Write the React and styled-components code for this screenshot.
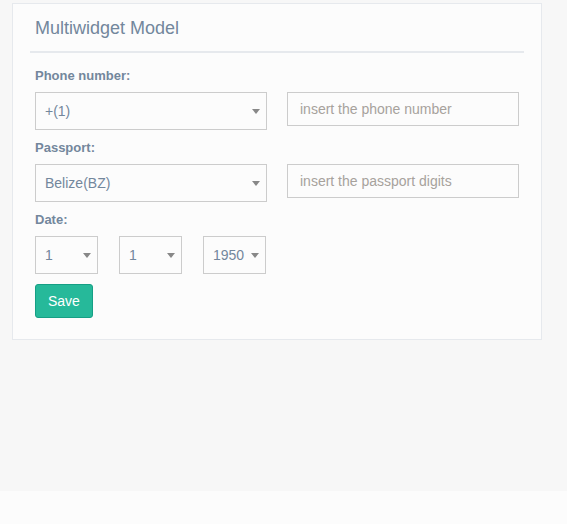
import styled, { createGlobalStyle } from "styled-components";

const GlobalStyle = createGlobalStyle`
  body {
    margin: 0;
    background: #fcfcfc;
    font-family: "Liberation Sans", Arial, sans-serif;
  }
`;

const Page = styled.div`
  height: 491px;
  box-sizing: border-box;
  padding: 3px 0 0 12px;
  background: #f7f7f7;
`;

const Panel = styled.div`
  width: 530px;
  height: 337px;
  box-sizing: border-box;
  padding: 10px 17px;
  background: #fcfcfc;
  border: 1px solid #e6e9ed;
`;

const Title = styled.div`
  padding: 2px 5px 11px;
  border-bottom: 2px solid #e6e9ed;

  h2 {
    margin: 0;
    font-size: 18px;
    line-height: 24px;
    font-weight: 400;
    color: #73879c;
  }
`;

const Form = styled.form`
  padding: 14px 5px 0;
`;

const Group = styled.div`
  margin-bottom: 9px;
`;

const Label = styled.label`
  display: block;
  margin-bottom: 7px;
  font-size: 13px;
  line-height: 18px;
  font-weight: 700;
  color: #73879c;
`;

const Row = styled.div`
  display: grid;
  grid-template-columns: ${(p) => p.$cols || "232px 232px"};
  column-gap: ${(p) => p.$gap || "20px"};
  align-items: start;
`;

const SelectWrap = styled.div`
  position: relative;

  &::after {
    content: "";
    position: absolute;
    right: 7px;
    top: 17px;
    border-left: 4px solid transparent;
    border-right: 4px solid transparent;
    border-top: 5px solid #888;
    pointer-events: none;
  }
`;

const Select = styled.select`
  appearance: none;
  display: block;
  width: 100%;
  height: 38px;
  margin: 0;
  padding: 0 20px 0 9px;
  box-sizing: border-box;
  border: 1px solid #ccc;
  border-radius: 0;
  background: #fcfcfc;
  font-family: "Liberation Sans", Arial, sans-serif;
  font-size: 14px;
  color: #73879c;
  outline: none;
`;

const Input = styled.input`
  display: block;
  width: 100%;
  height: 34px;
  margin: 0;
  padding: 0 12px;
  box-sizing: border-box;
  border: 1px solid #ccc;
  background: #fcfcfc;
  font-family: "Liberation Sans", Arial, sans-serif;
  font-size: 14px;
  color: #555;
  outline: none;

  &::placeholder {
    color: #a7a29c;
  }
`;

const Button = styled.button`
  margin-top: 1px;
  height: 34px;
  padding: 0 12px;
  border: 1px solid #169f85;
  border-radius: 3px;
  background: #26b99a;
  color: #fff;
  font-family: "Liberation Sans", Arial, sans-serif;
  font-size: 14px;
  cursor: pointer;
`;

function Dropdown({ value, options }) {
  return (
    <SelectWrap>
      <Select defaultValue={value}>
        {options.map((o) => (
          <option key={o}>{o}</option>
        ))}
      </Select>
    </SelectWrap>
  );
}

export default function App() {
  return (
    <>
      <GlobalStyle />
      <Page>
        <Panel>
          <Title>
            <h2>Multiwidget Model</h2>
          </Title>
          <Form onSubmit={(e) => e.preventDefault()}>
            <Group>
              <Label>Phone number:</Label>
              <Row>
                <Dropdown value="+(1)" options={["+(1)", "+(44)", "+(501)"]} />
                <Input placeholder="insert the phone number" />
              </Row>
            </Group>
            <Group>
              <Label>Passport:</Label>
              <Row>
                <Dropdown value="Belize(BZ)" options={["Belize(BZ)", "Canada(CA)", "Mexico(MX)"]} />
                <Input placeholder="insert the passport digits" />
              </Row>
            </Group>
            <Group>
              <Label>Date:</Label>
              <Row $cols="63px 63px 63px" $gap="21px">
                <Dropdown value="1" options={["1", "2", "3"]} />
                <Dropdown value="1" options={["1", "2", "3"]} />
                <Dropdown value="1950" options={["1950", "1951", "1952"]} />
              </Row>
            </Group>
            <Button type="submit">Save</Button>
          </Form>
        </Panel>
      </Page>
    </>
  );
}
